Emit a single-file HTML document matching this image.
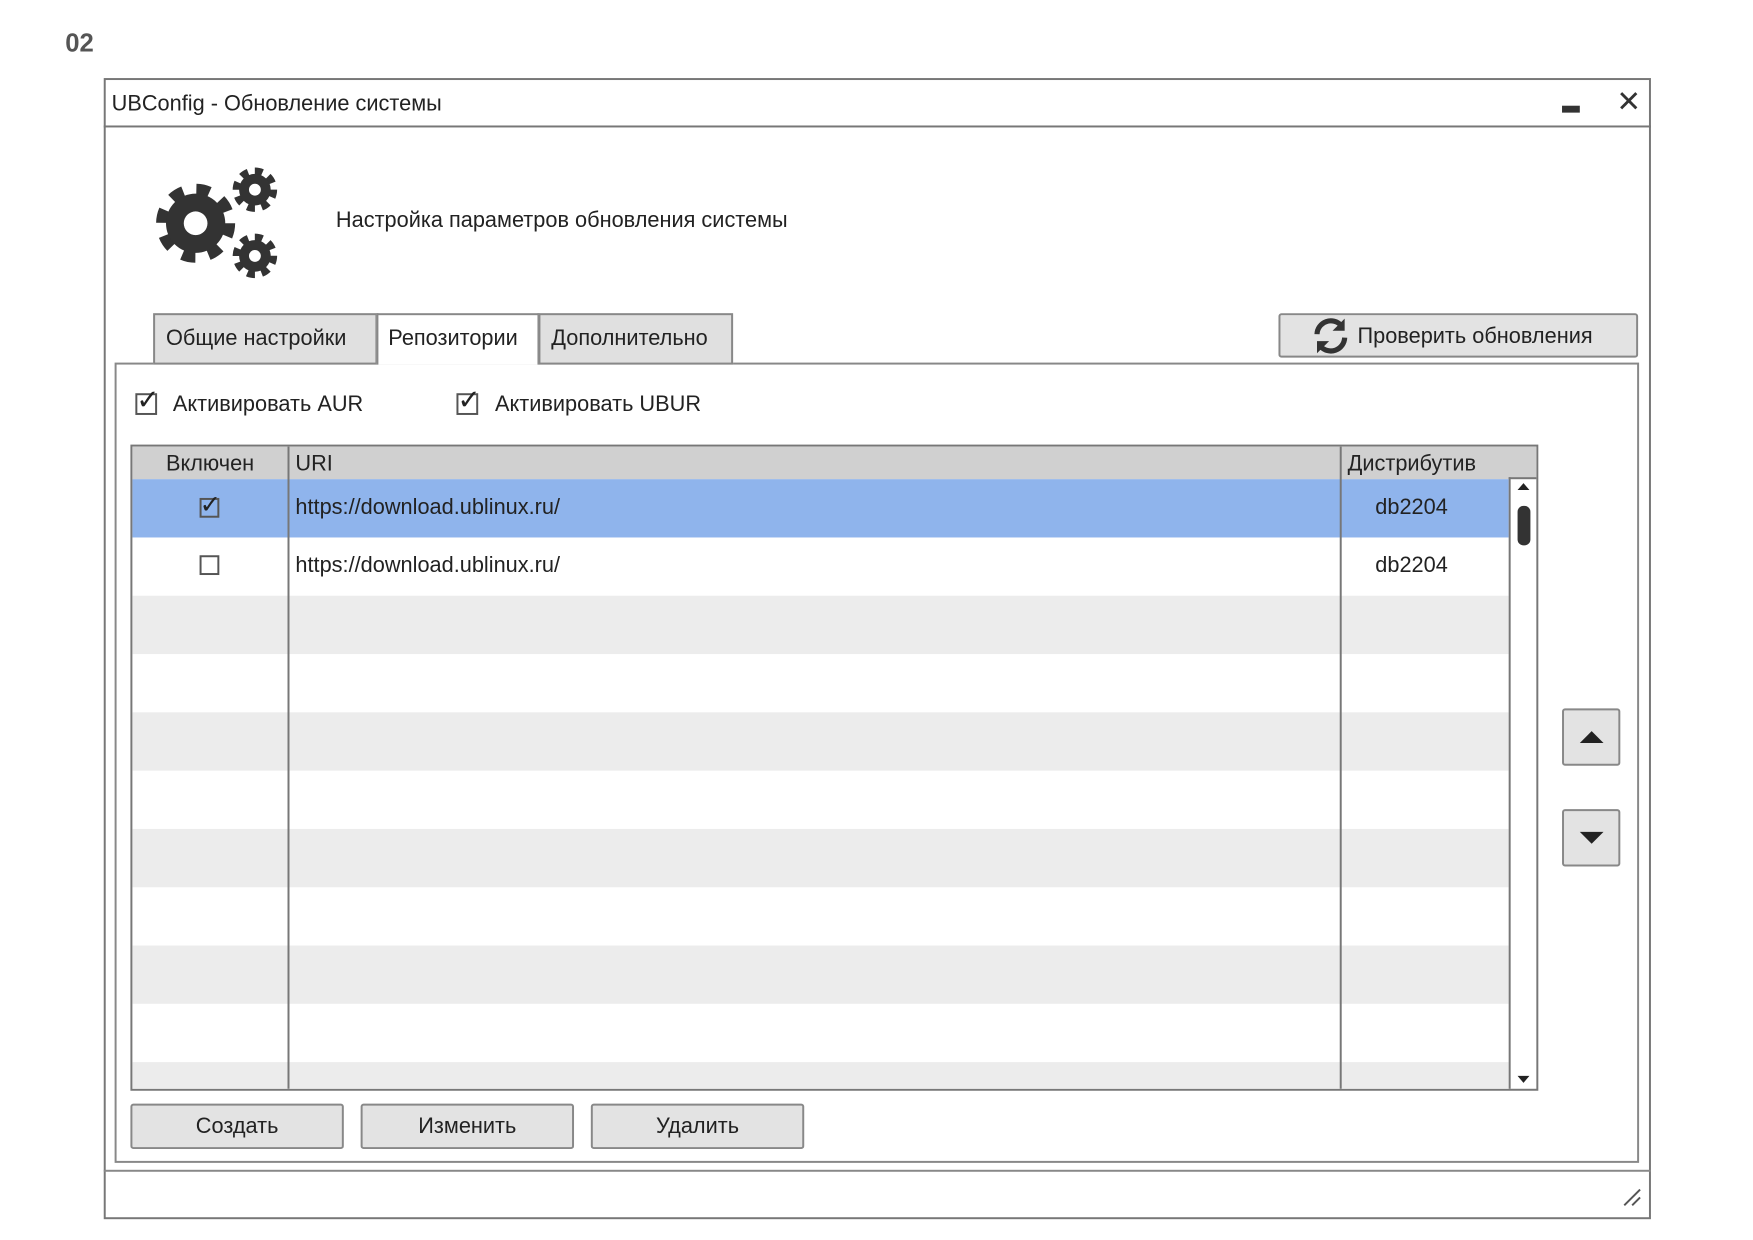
<!DOCTYPE html>
<html><head><meta charset="utf-8"><style>
*{margin:0;padding:0;box-sizing:border-box}
body{width:1753px;height:1240px;background:#fff;font-family:"Liberation Sans",sans-serif;color:#222;position:relative;overflow:hidden}
#w{position:absolute;left:0;top:0;width:1753px;height:1240px;transform:scale(0.988);transform-origin:0 0}
.a{position:absolute}
.t{font-size:22px;white-space:nowrap}
.btn{position:absolute;background:#e3e3e3;border:2px solid #888;border-radius:3px;font-size:22px;display:flex;align-items:center;justify-content:center}
.cb{position:absolute;width:22px;height:22px;border:2px solid #555;background:#fff}
.row{position:absolute;left:0;width:1393px;height:59px}
</style></head><body><div id="w">
<div class="a" style="left:66px;top:28px;font-size:26px;font-weight:bold;color:#555">02</div>
<div class="a" style="left:105px;top:79px;width:1566px;height:1155px;border:2px solid #777"></div>
<div class="a" style="left:105px;top:127px;width:1566px;height:2px;background:#777"></div>
<div class="a t" style="left:113px;top:92px">UBConfig - Обновление системы</div>
<div class="a" style="left:1581px;top:107px;width:18px;height:7px;background:#333"></div>
<div class="a" style="left:1636px;top:86px;font-size:30px;color:#333">✕</div>
<svg class="a" style="left:150px;top:160px" width="140" height="130" viewBox="0 0 140 130">
 <g fill="#333"><circle cx="48" cy="66" r="33" fill="none" stroke="#333" stroke-width="14" stroke-dasharray="13 13"/><circle cx="48" cy="66" r="30"/><circle cx="48" cy="66" r="12" fill="#fff"/>
 <circle cx="108" cy="32" r="18" fill="none" stroke="#333" stroke-width="9" stroke-dasharray="7.5 6.6"/><circle cx="108" cy="32" r="16"/><circle cx="108" cy="32" r="6" fill="#fff"/>
 <circle cx="108" cy="99" r="18" fill="none" stroke="#333" stroke-width="9" stroke-dasharray="7.5 6.6"/><circle cx="108" cy="99" r="16"/><circle cx="108" cy="99" r="6" fill="#fff"/></g>
</svg>
<div class="a t" style="left:340px;top:210px">Настройка параметров обновления системы</div>
<div class="a" style="left:116px;top:367px;width:1543px;height:810px;border:2px solid #888"></div>
<div class="a t" style="left:155px;top:317px;width:227px;height:52px;background:#e0e0e0;border:2px solid #888;padding:10px 0 0 11px">Общие настройки</div>
<div class="a t" style="left:381px;top:317px;width:165px;height:52px;background:#fff;border:2px solid #888;border-bottom:none;padding:10px 0 0 10px">Репозитории</div>
<div class="a t" style="left:545px;top:317px;width:197px;height:52px;background:#e0e0e0;border:2px solid #888;padding:10px 0 0 11px">Дополнительно</div>
<div class="btn" style="left:1294px;top:317px;width:364px;height:45px;justify-content:flex-start;padding-left:30px">
<svg width="42" height="42" viewBox="0 0 24 24" style="margin-right:6px"><path d="M4 11a8 8 0 0 1 14-5" fill="none" stroke="#333" stroke-width="3"/><path d="M20 2v7h-7z" fill="#333"/><path d="M20 13a8 8 0 0 1-14 5" fill="none" stroke="#333" stroke-width="3"/><path d="M4 22v-7h7z" fill="#333"/></svg>Проверить обновления</div>
<div class="cb" style="left:137px;top:398px"></div><div class="a" style="left:138px;top:388px;font-size:28px">✓</div>
<div class="a t" style="left:175px;top:396px">Активировать AUR</div>
<div class="cb" style="left:462px;top:398px"></div><div class="a" style="left:463px;top:388px;font-size:28px">✓</div>
<div class="a t" style="left:501px;top:396px">Активировать UBUR</div>
<div class="a" style="left:132px;top:450px;width:1425px;height:654px;border:2px solid #777;overflow:hidden">
 <div class="row" style="top:0;height:33px;width:1425px;background:#d0d0d0"></div>
 <div class="row" style="top:33px;background:#8fb4ec"></div>
 <div class="row" style="top:151px;background:#ececec"></div>
 <div class="row" style="top:269px;background:#ececec"></div>
 <div class="row" style="top:387px;background:#ececec"></div>
 <div class="row" style="top:505px;background:#ececec"></div>
 <div class="row" style="top:623px;background:#ececec"></div>
 <div class="a" style="left:157px;top:0;width:2px;height:660px;background:#777"></div>
 <div class="a" style="left:1222px;top:0;width:2px;height:660px;background:#777"></div>
 <div class="a" style="left:1393px;top:31px;width:2px;height:630px;background:#777"></div>
 <div class="a" style="left:1393px;top:31px;width:30px;height:2px;background:#777"></div>
 <div class="a t" style="left:34px;top:4px">Включен</div>
 <div class="a t" style="left:165px;top:4px">URI</div>
 <div class="a t" style="left:1230px;top:4px">Дистрибутив</div>
 <div class="cb" style="left:68px;top:52px;width:20px;height:20px;background:transparent"></div><div class="a" style="left:68px;top:43px;font-size:26px">✓</div>
 <div class="cb" style="left:68px;top:110px;width:20px;height:20px"></div>
 <div class="a t" style="left:165px;top:48px">https://download.ublinux.ru/</div>
 <div class="a t" style="left:165px;top:107px">https://download.ublinux.ru/</div>
 <div class="a t" style="left:1258px;top:48px">db2204</div>
 <div class="a t" style="left:1258px;top:107px">db2204</div>
 <div class="a" style="left:1402px;top:37px;border:6px solid transparent;border-bottom:7px solid #222;border-top:none"></div>
 <div class="a" style="left:1402px;top:60px;width:13px;height:40px;border-radius:6px;background:#333"></div>
 <div class="a" style="left:1402px;top:637px;border:6px solid transparent;border-top:7px solid #222;border-bottom:none"></div>
</div>
<div class="btn" style="left:1581px;top:717px;width:59px;height:58px"><div style="border:12px solid transparent;border-bottom:12px solid #222;border-top:none"></div></div>
<div class="btn" style="left:1581px;top:819px;width:59px;height:58px"><div style="border:12px solid transparent;border-top:12px solid #222;border-bottom:none"></div></div>
<div class="btn" style="left:132px;top:1117px;width:216px;height:46px">Создать</div>
<div class="btn" style="left:365px;top:1117px;width:216px;height:46px">Изменить</div>
<div class="btn" style="left:598px;top:1117px;width:216px;height:46px">Удалить</div>
<div class="a" style="left:105px;top:1184px;width:1566px;height:2px;background:#888"></div>
<svg class="a" style="left:1640px;top:1200px" width="22" height="22"><path d="M4 20L20 4M12 20L20 12" stroke="#555" stroke-width="2"/></svg>
</div></body></html>
